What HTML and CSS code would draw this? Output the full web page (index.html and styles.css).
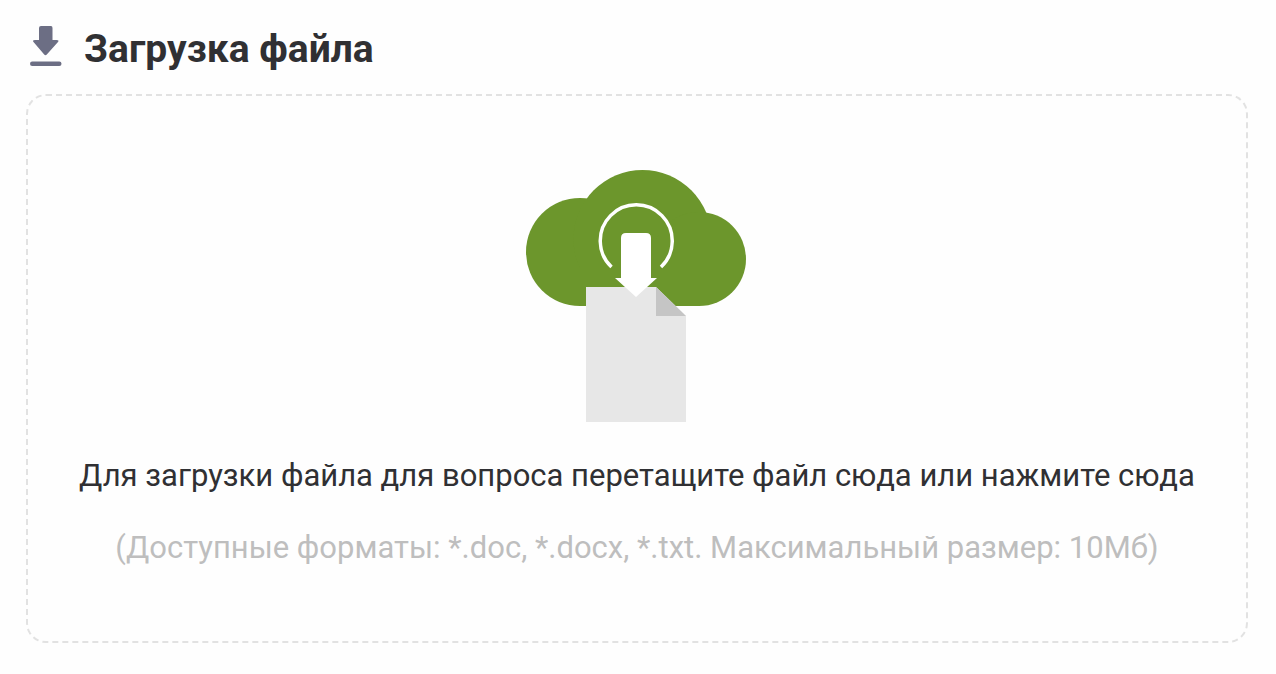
FILE: index.html
```html
<!DOCTYPE html>
<html lang="ru">
<head>
<meta charset="utf-8">
<meta name="viewport" content="width=device-width, initial-scale=1">
<title>Загрузка файла</title>
<link rel="stylesheet" href="styles.css">
</head>
<body>
<main class="upload">
  <header class="upload-header">
    <svg class="upload-icon" viewBox="0 -1 32 42" aria-hidden="true">
      <path d="M11 0H21Q22.500 0 22.500 2V14H26.500Q29.500 14 28 16L16.800 28.500Q15.500 30 14.200 28.500L3.500 16Q2 14 5 14H9V2Q9 0 11 0Z"/>
      <rect y="35.500" width="31.500" height="4.500" rx="2.200"/>
    </svg>
    <h1 class="upload-title">Загрузка файла</h1>
  </header>
  <label class="dropzone" for="file">
    <input class="dropzone-input" id="file" type="file" accept=".doc,.docx,.txt">
    <svg class="dropzone-art" viewBox="526 170 222 252" aria-hidden="true">
      <g fill="#6c962c">
        <circle cx="580" cy="252" r="54"/>
        <circle cx="642.500" cy="239" r="69"/>
        <circle cx="699" cy="259" r="47"/>
        <rect x="580" y="240" width="119" height="66"/>
      </g>
      <path d="M586 287H656L686 316V422H586Z" fill="#e7e7e7"/>
      <path d="M656 287L686 316H656Z" fill="#c5c5c5"/>
      <path d="M611.500 267A36 36 0 1 1 661 267" fill="none" stroke="#fff" stroke-width="3.500"/>
      <path d="M621 278V238Q621 233 626 233H646Q651 233 651 238V278H657L636 297L615 278Z" fill="#fff"/>
    </svg>
    <span class="dropzone-text">Для загрузки файла для вопроса перетащите файл сюда или нажмите сюда</span>
    <span class="dropzone-hint">(Доступные форматы: *.doc, *.docx, *.txt. Максимальный размер: 10Мб)</span>
  </label>
</main>
</body>
</html>
```
FILE: styles.css
```css
* {
  box-sizing: border-box;
}

body {
  margin: 0;
  background: #fefefe;
  color: #303033;
  font-family: Roboto, "Noto Sans", sans-serif;
}

.upload {
  padding: 25px 28px 30px 26px;
}

.upload-header {
  display: flex;
  align-items: flex-start;
  gap: 22px;
  padding-left: 4px;
  margin-bottom: 21px;
}

.upload-icon {
  width: 32px;
  height: 42px;
  flex: none;
  fill: #6c6e84;
}

.upload-title {
  margin: 0;
  font-size: 39px;
  line-height: 48px;
  font-weight: 700;
}

.dropzone {
  display: flex;
  flex-direction: column;
  align-items: center;
  padding: 74px 24px 73px;
  border: 2px dashed #e2e2e2;
  border-radius: 20px;
  font-size: 31px;
  line-height: 40px;
  text-align: center;
  cursor: pointer;
}

.dropzone:focus-within {
  border-color: #6c962c;
}

.dropzone-input {
  position: absolute;
  width: 1px;
  height: 1px;
  opacity: 0;
}

.dropzone-art {
  width: 222px;
  height: 252px;
  margin-bottom: 34px;
}

.dropzone-text {
  margin-bottom: 32px;
}

.dropzone-hint {
  color: #bebebe;
}
```
